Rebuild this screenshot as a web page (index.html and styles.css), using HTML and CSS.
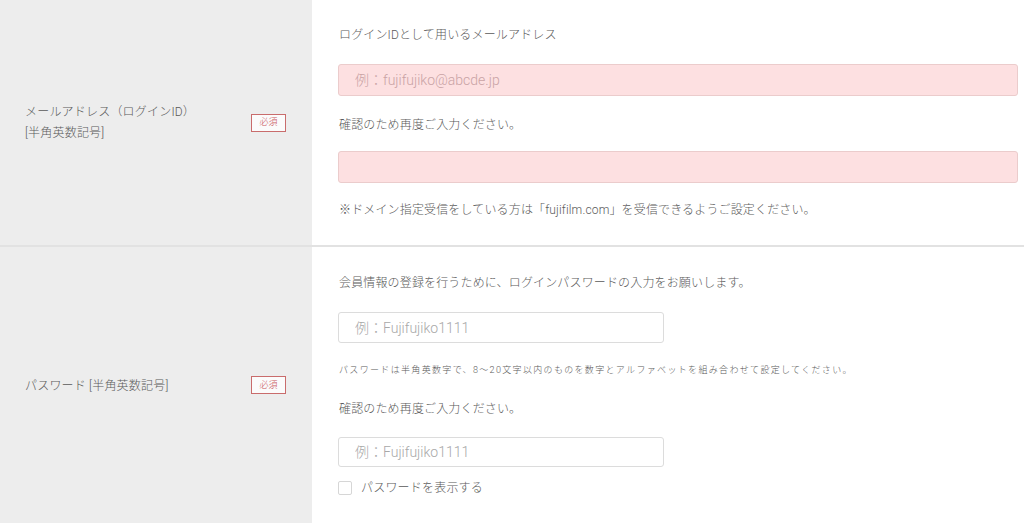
FILE: index.html
```html
<!DOCTYPE html>
<html lang="ja">
<head>
<meta charset="utf-8">
<title>会員登録</title>
<link rel="stylesheet" href="styles.css">
</head>
<body>
<div class="form">
  <div class="row row-mail">
    <div class="label-col">
      <div class="label">メールアドレス（ログインID）<br>[半角英数記号]</div>
      <span class="badge">必須</span>
    </div>
    <div class="field-col">
      <p class="text">ログインIDとして用いるメールアドレス</p>
      <input class="input input-error input-wide m-in1" type="text" placeholder="例：fujifujiko@abcde.jp">
      <p class="text m-t2">確認のため再度ご入力ください。</p>
      <input class="input input-error input-wide m-in2" type="text">
      <p class="text m-note">※ドメイン指定受信をしている方は「fujifilm.com」を受信できるようご設定ください。</p>
    </div>
  </div>
  <div class="row row-pass">
    <div class="label-col">
      <div class="label">パスワード [半角英数記号]</div>
      <span class="badge">必須</span>
    </div>
    <div class="field-col">
      <p class="text">会員情報の登録を行うために、ログインパスワードの入力をお願いします。</p>
      <input class="input input-narrow p-in1" type="text" placeholder="例：Fujifujiko1111">
      <p class="small">パスワードは半角英数字で、8〜20文字以内のものを数字とアルファベットを組み合わせて設定してください。</p>
      <p class="text p-t2">確認のため再度ご入力ください。</p>
      <input class="input input-narrow p-in2" type="text" placeholder="例：Fujifujiko1111">
      <label class="check"><span class="box"></span><span>パスワードを表示する</span></label>
    </div>
  </div>
</div>
</body>
</html>
```
FILE: styles.css
```css
html, body {
  margin: 0;
  padding: 0;
  background: #fff;
}
body {
  font-family: Roboto, "Noto Sans CJK JP", sans-serif;
  font-weight: 300;
  color: #5a5a5a;
  font-size: 12px;
}
.form {
  width: 1024px;
}
.row {
  display: flex;
}
.row-mail {
  height: 245px;
  border-bottom: 2px solid #e2e2e2;
}
.row-pass {
  height: 276px;
}
.label-col {
  width: 312px;
  flex: none;
  box-sizing: border-box;
  background: #ededed;
  display: flex;
  align-items: center;
  justify-content: space-between;
  padding: 0 26px 0 25px;
}
.label {
  font-size: 12px;
  line-height: 21px;
  letter-spacing: 0.2px;
}
.row-pass .label {
  margin-top: 2px;
}
.badge {
  display: inline-flex;
  align-items: center;
  justify-content: center;
  width: 33px;
  height: 16px;
  border: 1px solid #c96c6c;
  background: #fbfbfb;
  color: #c9555b;
  font-size: 9px;
  line-height: 1;
}
.field-col {
  flex: 1;
  box-sizing: border-box;
  padding: 25px 7px 0 26px;
  display: flex;
  flex-direction: column;
  align-items: flex-start;
}
.row-pass .field-col {
  padding-top: 26px;
}
.text {
  margin: 0;
  font-size: 12px;
  line-height: 20px;
  letter-spacing: 0.15px;
  padding-left: 1px;
}
.input {
  box-sizing: border-box;
  height: 32px;
  border: 1px solid #dcdcdc;
  border-radius: 3px;
  background: #fff;
  font-family: Roboto, "Noto Sans CJK JP", sans-serif;
  font-weight: 300;
  font-size: 14px;
  color: #555;
  padding: 0 16px;
  outline: none;
}
.input::placeholder {
  color: #a8a8a8;
}
.input-error {
  background: #fde0e1;
  border-color: #ebcccc;
}
.input-error::placeholder {
  color: #c9a3a5;
}
.input-wide {
  width: 680px;
}
.input-narrow {
  width: 326px;
  height: 31px;
}
.m-in1 {
  margin: 19px 0 0;
}
.m-t2 {
  margin-top: 19px;
}
.m-in2 {
  margin-top: 16px;
}
.m-note {
  margin-top: 17px;
}
.p-in1 {
  margin-top: 19px;
}
.small {
  margin: 20px 0 0;
  font-size: 9px;
  line-height: 14px;
  letter-spacing: 1.33px;
  padding-left: 1px;
}
.p-t2 {
  margin-top: 22px;
}
.p-in2 {
  margin-top: 18px;
  height: 30px;
}
.check {
  display: flex;
  align-items: center;
  gap: 9px;
  margin-top: 13px;
  font-size: 12px;
  line-height: 16px;
  letter-spacing: 0.2px;
}
.box {
  width: 12px;
  height: 12px;
  border: 1px solid #d6d6d6;
  border-radius: 2px;
  background: #fff;
}
```
